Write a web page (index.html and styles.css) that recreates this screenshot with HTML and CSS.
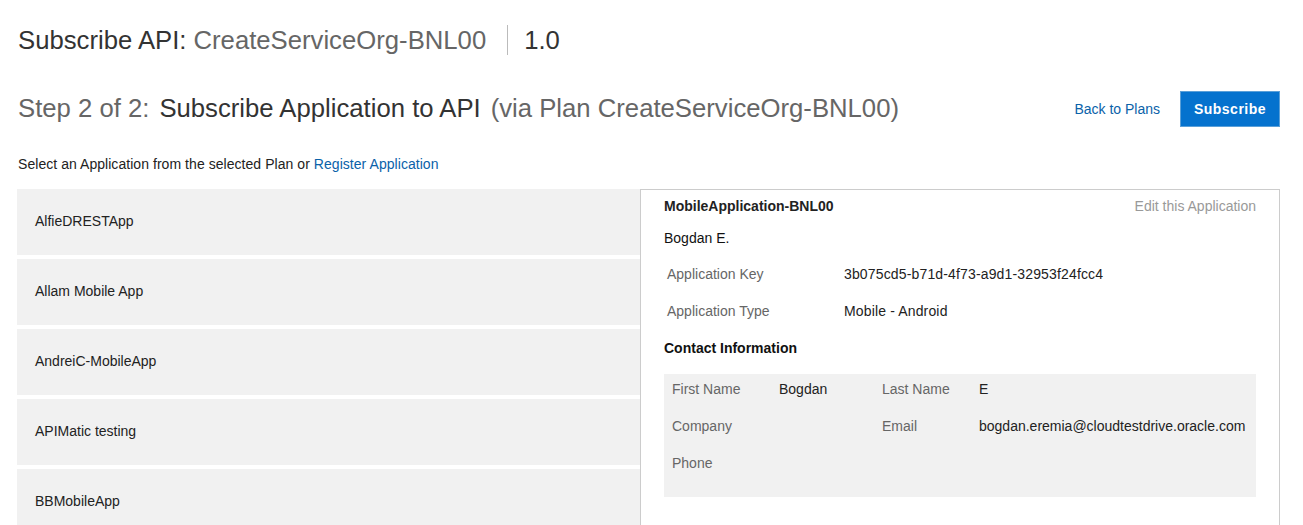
FILE: index.html
```html
<!DOCTYPE html>
<html>
<head>
<meta charset="utf-8">
<link rel="stylesheet" href="styles.css">
</head>
<body>
<div class="page">
  <div class="api-title">
    <span class="t-dark">Subscribe API:</span>
    <span class="t-gray">CreateServiceOrg-BNL00</span>
    <span class="sep"></span>
    <span class="t-dark">1.0</span>
  </div>
  <div class="step-row">
    <div class="step-title">
      <span class="t-gray">Step 2 of 2:</span>
      <span class="t-dark">Subscribe Application to API</span>
      <span class="t-gray">(via Plan CreateServiceOrg-BNL00)</span>
    </div>
    <div class="actions">
      <a class="link" href="#">Back to Plans</a>
      <button class="btn-primary">Subscribe</button>
    </div>
  </div>
  <p class="hint">Select an Application from the selected Plan or <a class="link" href="#">Register Application</a></p>
  <div class="split">
    <ul class="app-list">
      <li class="app-item">AlfieDRESTApp</li>
      <li class="app-item">Allam Mobile App</li>
      <li class="app-item">AndreiC-MobileApp</li>
      <li class="app-item">APIMatic testing</li>
      <li class="app-item">BBMobileApp</li>
    </ul>
    <div class="detail">
      <div class="detail-head">
        <span class="app-name">MobileApplication-BNL00</span>
        <a class="edit" href="#">Edit this Application</a>
      </div>
      <div class="owner">Bogdan E.</div>
      <div class="kv"><span class="kv-label">Application Key</span><span class="kv-value">3b075cd5-b71d-4f73-a9d1-32953f24fcc4</span></div>
      <div class="kv"><span class="kv-label">Application Type</span><span class="kv-value">Mobile - Android</span></div>
      <div class="section-title">Contact Information</div>
      <div class="contact">
        <span class="c-label">First Name</span><span class="c-value">Bogdan</span><span class="c-label">Last Name</span><span class="c-value">E</span>
        <span class="c-label">Company</span><span class="c-value"></span><span class="c-label">Email</span><span class="c-value">bogdan.eremia@cloudtestdrive.oracle.com</span>
        <span class="c-label">Phone</span><span class="c-value"></span><span class="c-label"></span><span class="c-value"></span>
      </div>
    </div>
  </div>
</div>
</body>
</html>
```

FILE: styles.css
```css
* { box-sizing: border-box; }
html, body { margin: 0; padding: 0; background: #fff; }
html { height: 525px; overflow: hidden; }
body {
  font-family: "Liberation Sans", Arial, sans-serif;
  font-size: 14px;
  color: #222;
  height: 525px;
  overflow: hidden;
}
.page { padding: 0 23px 0 17px; height: 525px; overflow: hidden; }
.t-dark { color: #333; }
.t-gray { color: #666; }
.api-title {
  display: flex;
  align-items: center;
  height: 30px;
  margin-top: 25px;
  font-size: 25.7px;
  line-height: 30px;
  gap: 7px;
  padding-left: 1px;
}
.sep {
  display: inline-block;
  width: 1px;
  height: 30px;
  background: #bbb;
  margin: 0 9px 0 14px;
}
.step-row {
  display: flex;
  align-items: center;
  justify-content: space-between;
  margin-top: 35px;
  height: 36px;
}
.step-title {
  font-size: 25.7px;
  line-height: 30px;
  padding-left: 1px;
  display: flex;
  gap: 10px;
}
.actions { display: flex; align-items: center; gap: 20px; margin-top: 2px; }
.link { color: #0a62a9; text-decoration: none; }
.btn-primary {
  font-family: "Liberation Sans", Arial, sans-serif;
  font-size: 14px;
  font-weight: bold;
  color: #fff;
  background: #0572ce;
  border: 1px solid #5a9fd8;
  height: 36px;
  width: 100px;
  padding: 0;
  letter-spacing: 0.5px;
}
.hint { margin: 29px 0 0 1px; line-height: 18px; height: 18px; color: #222; letter-spacing: 0.05px; }
.split {
  display: grid;
  grid-template-columns: 623px 1fr;
  margin-top: 16px;
}
.app-list { list-style: none; margin: 0; padding: 0; display: flex; flex-direction: column; gap: 4px; }
.app-item {
  background: #f1f1f1;
  height: 66px;
  flex: none;
  display: flex;
  align-items: center;
  padding: 0 0 3px 18px;
  color: #222;
}
.detail {
  border: 1px solid #ccc;
  border-bottom: none;
  padding: 7px 23px 0 23px;
  height: 400px;
}
.detail-head {
  display: flex;
  justify-content: space-between;
  line-height: 18px;
}
.app-name { font-weight: bold; color: #222; }
.edit { color: #999; text-decoration: none; }
.owner { margin-top: 14px; line-height: 18px; color: #111; }
.kv { display: flex; line-height: 18px; margin-top: 18px; padding-left: 3px; }
.kv + .kv { margin-top: 19px; }
.kv-label { width: 177px; color: #666; }
.kv-value { color: #222; letter-spacing: 0.15px; }
.section-title { font-weight: bold; margin-top: 19px; line-height: 18px; color: #111; }
.contact {
  margin-top: 17px;
  background: #f1f1f1;
  padding: 6px 8px 25px 8px;
  display: grid;
  grid-template-columns: 107px 103px 97px 1fr;
  grid-auto-rows: 18px;
  row-gap: 19px;
  line-height: 18px;
}
.c-label { color: #666; }
.c-value { color: #222; }
```
